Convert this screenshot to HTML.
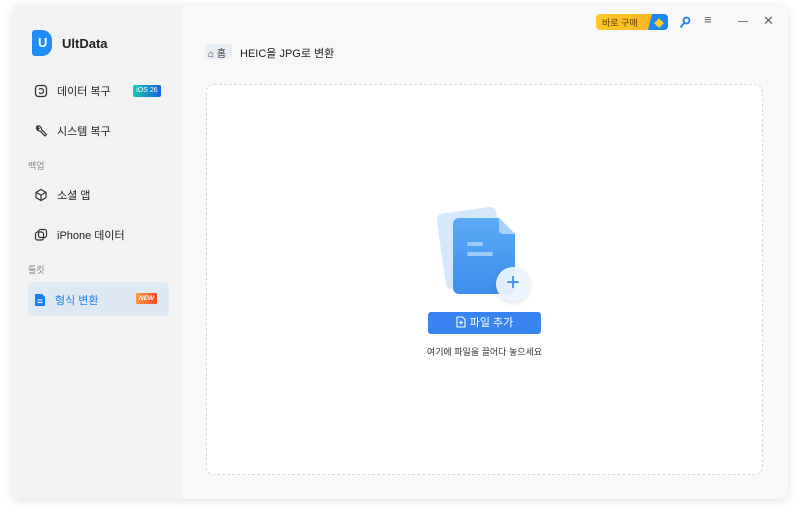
<!DOCTYPE html>
<html><head><meta charset="utf-8"><style>
*{margin:0;padding:0;box-sizing:border-box}
body{width:800px;height:519px;background:#fff;font-family:"Liberation Sans","Noto Sans CJK KR",sans-serif;position:relative;overflow:hidden}
.win{position:absolute;left:12px;top:5px;width:776px;height:494px;border-radius:8px;background:#f8f8f9;box-shadow:0 2px 10px rgba(0,0,0,.12);overflow:hidden}
.side{position:absolute;left:0;top:0;width:170px;height:100%;background:#f2f2f3}
.abs{position:absolute}
.item{position:absolute;left:22px;font-size:11px;color:#222;display:flex;align-items:center;gap:9px}
.sec{position:absolute;left:16px;font-size:9px;color:#888}
.dash{position:absolute;left:194px;top:79px;width:557px;height:391px;border:1.5px dashed #d6d6d6;border-radius:8px;background:#fff}
</style></head><body>
<div class="win">
 <div class="side">
  <div class="abs" style="left:20px;top:25px;width:20px;height:26px;background:#1f8df5;border-radius:3px 10px 10px 3px"></div>
  <div class="abs" style="left:26px;top:30px;color:#fff;font-weight:bold;font-size:13px">U</div>
  <div class="abs" style="left:50px;top:31px;font-size:13px;font-weight:bold;color:#222">UltData</div>
  <div class="item" style="top:78px"><svg width="14" height="14" viewBox="0 0 14 14"><rect x="1.5" y="1.5" width="11" height="11" rx="3" fill="none" stroke="#333" stroke-width="1.3"/><path d="M5 5.5a2.5 2.5 0 1 1 0 3" fill="none" stroke="#333" stroke-width="1.2"/></svg>데이터 복구</div>
  <div class="abs" style="left:121px;top:80px;width:28px;height:12px;background:linear-gradient(90deg,#12c8b0,#1a5fe0);border-radius:2px;color:#fff;font-size:7px;line-height:12px;text-align:center">iOS 26</div>
  <div class="item" style="top:118px"><svg width="14" height="14" viewBox="0 0 14 14"><path d="M3 2.5a3 3 0 0 0 3 4.5l5 5 1.5-1.5-5-5A3 3 0 0 0 3 2.5l2 2-1 1z" fill="none" stroke="#333" stroke-width="1.2"/></svg>시스템 복구</div>
  <div class="sec" style="top:154px">백업</div>
  <div class="item" style="top:182px"><svg width="14" height="14" viewBox="0 0 14 14"><path d="M7 1.5l5 2.8v5.4L7 12.5 2 9.7V4.3zM2 4.3l5 2.8 5-2.8M7 7.1v5.4" fill="none" stroke="#333" stroke-width="1.2"/></svg>소셜 앱</div>
  <div class="item" style="top:222px"><svg width="14" height="14" viewBox="0 0 14 14"><rect x="1.5" y="4" width="8" height="8" rx="2" fill="none" stroke="#333" stroke-width="1.2"/><rect x="4.5" y="1.5" width="8" height="8" rx="2" fill="none" stroke="#333" stroke-width="1.2"/></svg>iPhone 데이터</div>
  <div class="sec" style="top:258px">툴킷</div>
  <div class="abs" style="left:16px;top:277px;width:141px;height:34px;background:#dfe9f4;border-radius:5px"></div>
  <div class="item" style="top:287px;color:#1a7ef0"><svg width="12" height="14" viewBox="0 0 12 14"><path d="M1 1h7l3 3v9H1z" fill="#1a7ef0"/><path d="M3.5 7h5M3.5 9.5h5" stroke="#fff" stroke-width="1"/></svg>형식 변환</div>
  <div class="abs" style="left:124px;top:288px;width:21px;height:11px;background:linear-gradient(90deg,#ff9a3c,#f04a2a);color:#fff;font-size:6.5px;font-weight:bold;font-style:italic;line-height:11px;text-align:center;border-radius:1px">NEW</div>
 </div>
 <div class="abs" style="left:193px;top:39px;width:27px;height:15px;background:#e9eef5;border-radius:3px"></div>
 <div class="abs" style="left:196px;top:40px;font-size:10px;color:#333">⌂ 홈</div>
 <div class="abs" style="left:228px;top:40px;font-size:11px;color:#222">HEIC을 JPG로 변환</div>
 <div class="abs" style="left:584px;top:9px;width:72px;height:16px;border-radius:4px;background:linear-gradient(90deg,#fec92a,#f9b31a);overflow:hidden"><div class="abs" style="left:54px;top:0;width:22px;height:16px;background:#1a8af2;transform:skewX(-15deg)"></div><span class="abs" style="left:6px;top:2px;font-size:9px;color:#5a3a00">바로 구매</span><span class="abs" style="left:58px;top:1px;font-size:10px;color:#fc3">◆</span></div>
 <svg class="abs" style="left:667px;top:11px" width="12" height="13" viewBox="0 0 12 13"><circle cx="7.5" cy="4.5" r="3" fill="none" stroke="#1a7ef0" stroke-width="1.8"/><path d="M5.5 6.5L1.5 11.5" stroke="#1a7ef0" stroke-width="1.8"/></svg>
 <div class="abs" style="left:692px;top:7px;font-size:13px;color:#666">≡</div>
 <div class="abs" style="left:726px;top:16px;width:10px;height:1px;background:#777"></div>
 <div class="abs" style="left:751px;top:8px;font-size:13px;color:#666">✕</div>
 <div class="dash">
  <div class="abs" style="left:234px;top:125px;width:60px;height:76px;background:#d6e8fb;border-radius:6px;transform:rotate(-8deg)"></div>
  <svg class="abs" style="left:246px;top:133px" width="62" height="76" viewBox="0 0 62 76"><defs><linearGradient id="g" x1="0" y1="0" x2="0" y2="1"><stop offset="0" stop-color="#5aaaf5"/><stop offset="1" stop-color="#3e8ef0"/></linearGradient></defs><path d="M6 0H46L62 16V70a6 6 0 0 1-6 6H6a6 6 0 0 1-6-6V6a6 6 0 0 1 6-6z" fill="url(#g)"/><path d="M46 0V12a4 4 0 0 0 4 4H62z" fill="#a9d2fb"/></svg>
  <div class="abs" style="left:260px;top:157px;width:16px;height:4px;background:#9fcaf8;border-radius:2px"></div>
  <div class="abs" style="left:260px;top:167px;width:26px;height:4px;background:#9fcaf8;border-radius:2px"></div>
  <div class="abs" style="left:289px;top:182px;width:34px;height:34px;border-radius:50%;background:rgba(235,243,253,.95);box-shadow:0 2px 6px rgba(0,0,0,.12);color:#3a8ef0;font-size:24px;line-height:32px;text-align:center">+</div>
  <div class="abs" style="left:221px;top:227px;width:113px;height:22px;background:#3a84f2;border-radius:3px;color:#fff;font-size:11px;line-height:22px;text-align:center"><svg width="10" height="12" viewBox="0 0 10 12" style="vertical-align:-2px;margin-right:4px"><path d="M1 1h5.5L9 3.5V11H1z" fill="none" stroke="#fff" stroke-width="1.1"/><path d="M5 4.5v4M3 6.5h4" stroke="#fff" stroke-width="1.1"/></svg>파일 추가</div>
  <div class="abs" style="left:0;top:260px;width:100%;text-align:center;font-size:9px;color:#333">여기에 파일을 끌어다 놓으세요</div>
 </div>
</div>
</body></html>
